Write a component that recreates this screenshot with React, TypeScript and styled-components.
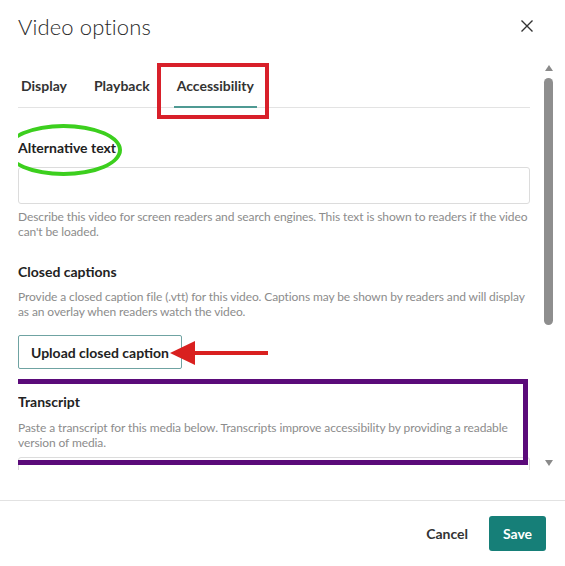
import React, { FC } from "react"
import { styled, createGlobalStyle } from "styled-components"

const GlobalStyle = createGlobalStyle`
    html, body {
        margin: 0;
        padding: 0;
        background: #fff;
    }
    body {
        font-family: Lato, "Noto Sans", "Liberation Sans", sans-serif;
        color: #262626;
    }
`

const Dialog = styled.div`
    width: 565px;
    height: 566px;
    display: flex;
    flex-direction: column;
    background: #fff;
    overflow: hidden;
`

const Header = styled.div`
    height: 60px;
    display: flex;
    align-items: center;
    justify-content: space-between;
    padding: 0 31px 8px 18px;
    box-sizing: border-box;
`

const Title = styled.h1`
    margin: 0;
    font-size: 22px;
    font-weight: 300;
    color: #2a2a2a;
    letter-spacing: 0.1px;
`

const CloseButton = styled.button`
    border: none;
    background: none;
    padding: 0;
    width: 14px;
    height: 14px;
    display: flex;
    cursor: pointer;
`

const Body = styled.div`
    height: 410px;
    display: flex;
    padding: 0 8px 0 18px;
`

const Content = styled.div`
    flex: 1;
    overflow: hidden;
    display: flex;
    flex-direction: column;
`

const Tabs = styled.div`
    height: 48px;
    display: flex;
    border-bottom: 1px solid #e3e3e3;
    box-sizing: border-box;
    flex-shrink: 0;
`

const Tab = styled.div<{ $active?: boolean; $marked?: boolean }>`
    position: relative;
    display: flex;
    align-items: center;
    padding: 4px 3px 0;
    margin-right: 21px;
    font-size: 14px;
    font-weight: 700;
    color: #333;
    border-bottom: 2px solid ${(p) => (p.$active ? "#4f9a93" : "transparent")};
    margin-bottom: -1px;
    &::after {
        content: "";
        display: ${(p) => (p.$marked ? "block" : "none")};
        position: absolute;
        left: -17px;
        right: -12px;
        top: 3px;
        bottom: -13px;
        border: 4px solid #d8202a;
    }
`

const Section = styled.div<{ $gap: number }>`
    position: relative;
    display: flex;
    flex-direction: column;
    margin-top: ${(p) => p.$gap}px;
    flex-shrink: 0;
`

const Label = styled.div<{ $circled?: boolean }>`
    position: relative;
    font-size: 14px;
    font-weight: 700;
    line-height: 20px;
    color: #222;
    align-self: flex-start;
    &::after {
        content: "";
        display: ${(p) => (p.$circled ? "block" : "none")};
        position: absolute;
        left: -13px;
        top: -14px;
        width: 109px;
        height: 44px;
        border: 4px solid #3ccf1e;
        border-radius: 50%;
    }
`

const TextInput = styled.input`
    margin-top: 9px;
    height: 37px;
    border: 1px solid #dcdcdc;
    border-radius: 3px;
    box-sizing: border-box;
    font: inherit;
`

const Help = styled.p<{ $top: number }>`
    margin: ${(p) => p.$top}px 0 0;
    font-size: 12px;
    letter-spacing: -0.1px;
    line-height: 15px;
    color: #8c8c8c;
`

const OutlineButton = styled.button`
    position: relative;
    margin-top: 16px;
    align-self: flex-start;
    height: 34px;
    padding: 0 12px;
    border: 1px solid #6fa3a2;
    border-radius: 2px;
    background: #fff;
    font-family: inherit;
    font-size: 14px;
    font-weight: 700;
    color: #222;
`

const Arrow = styled.svg`
    position: absolute;
    left: 151px;
    top: 4px;
`

const Highlight = styled.div`
    position: absolute;
    left: -13px;
    top: -13px;
    right: 2px;
    height: 86px;
    border: 5px solid #5b0b7a;
    box-sizing: border-box;
    pointer-events: none;
`

const TextArea = styled.textarea`
    margin-top: 7px;
    height: 60px;
    border: 1px solid #dcdcdc;
    border-radius: 3px;
    resize: none;
    font: inherit;
`

const Scrollbar = styled.div`
    width: 17px;
    margin-left: 10px;
    display: flex;
    flex-direction: column;
    align-items: center;
    padding: 5px 0 4px;
    box-sizing: border-box;
`

const ScrollArrow = styled.div<{ $down?: boolean }>`
    width: 0;
    height: 0;
    border-left: 4px solid transparent;
    border-right: 4px solid transparent;
    ${(p) => (p.$down ? "border-top: 6px solid #8a8a8a;" : "border-bottom: 6px solid #8a8a8a;")}
`

const Thumb = styled.div`
    width: 9px;
    height: 247px;
    margin-top: 7px;
    border-radius: 5px;
    background: #8e8e8e;
`

const Spacer = styled.div`
    flex: 1;
`

const Footer = styled.div`
    margin-top: 30px;
    height: 66px;
    border-top: 1px solid #e2e2e2;
    display: flex;
    align-items: center;
    justify-content: flex-end;
    padding: 0 19px 0 0;
    box-sizing: border-box;
    gap: 21px;
`

const TextButton = styled.button`
    border: none;
    background: none;
    font-family: inherit;
    font-size: 14px;
    font-weight: 700;
    color: #333;
    padding: 0;
`

const PrimaryButton = styled.button`
    width: 57px;
    height: 35px;
    border: none;
    border-radius: 3px;
    background: #167f78;
    color: #fff;
    font-family: inherit;
    font-size: 14px;
    font-weight: 700;
`

const App: FC = () => {
    return <>
        <GlobalStyle />
        <Dialog>
            <Header>
                <Title>Video options</Title>
                <CloseButton aria-label="Close">
                    <svg width="14" height="14" viewBox="0 0 14 14">
                        <path d="M1.5 1.5 L12.5 12.5 M12.5 1.5 L1.5 12.5" stroke="#333" strokeWidth="1.4" />
                    </svg>
                </CloseButton>
            </Header>
            <Body>
                <Content>
                    <Tabs>
                        <Tab>Display</Tab>
                        <Tab>Playback</Tab>
                        <Tab $active $marked>Accessibility</Tab>
                    </Tabs>

                    <Section $gap={30}>
                        <Label $circled>Alternative text</Label>
                        <TextInput type="text" />
                        <Help $top={5}>
                            Describe this video for screen readers and search engines. This text is shown to readers if the video can't be loaded.
                        </Help>
                    </Section>

                    <Section $gap={23}>
                        <Label>Closed captions</Label>
                        <Help $top={7}>
                            Provide a closed caption file (.vtt) for this video. Captions may be shown by readers and will display as an overlay when readers watch the video.
                        </Help>
                        <OutlineButton>
                            Upload closed caption
                            <Arrow width="100" height="26" viewBox="0 0 100 26">
                                <path d="M24 11 L98 11 L98 15 L24 15 Z" fill="#d9201f" />
                                <path d="M0 13 L25 1 L25 25 Z" fill="#d9201f" />
                            </Arrow>
                        </OutlineButton>
                    </Section>

                    <Section $gap={23}>
                        <Highlight />
                        <Label>Transcript</Label>
                        <Help $top={8}>
                            Paste a transcript for this media below. Transcripts improve accessibility by providing a readable version of media.
                        </Help>
                        <TextArea />
                    </Section>
                </Content>
                <Scrollbar>
                    <ScrollArrow />
                    <Thumb />
                    <Spacer />
                    <ScrollArrow $down />
                </Scrollbar>
            </Body>
            <Footer>
                <TextButton>Cancel</TextButton>
                <PrimaryButton>Save</PrimaryButton>
            </Footer>
        </Dialog>
    </>
}

export default App
